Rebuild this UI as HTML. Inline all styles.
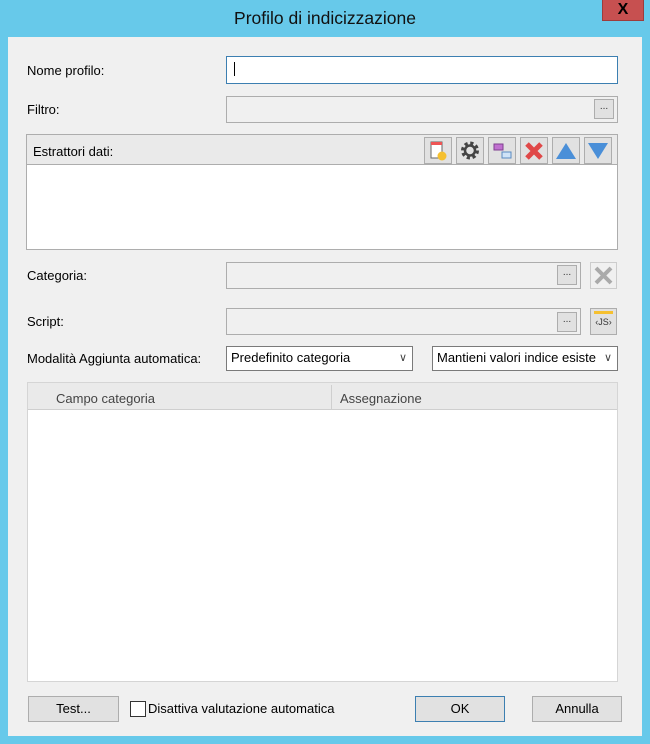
<!DOCTYPE html>
<html><head><meta charset="utf-8"><style>
*{box-sizing:border-box;margin:0;padding:0}
body{width:650px;height:744px;background:#67c9ea;position:relative;font-family:"Liberation Sans",sans-serif;font-size:13px;color:#000;overflow:hidden}
.a{position:absolute}
.title{left:0;width:650px;top:8px;text-align:center;font-size:17.5px;color:#111}
.close{left:602px;top:0;width:42px;height:21px;background:#c75050;border:1px solid #9d3c3c;border-top:none;color:#000;font-weight:bold;text-align:center;font-size:16px;line-height:20px}
.client{left:8px;top:37px;width:634px;height:699px;background:#f0f0f0}
.box{border:1px solid #adadad;background:#f0f0f0}
.white{background:#fff}
.dots{width:20px;height:20px;border:1px solid #adadad;background:#e1e1e1;text-align:center;font-size:10px;line-height:14px;color:#333}
.btn{border:1px solid #adadad;background:#e1e1e1;text-align:center;line-height:24px}
.tb{width:28px;height:27px;border:1px solid #adadad;background:#e1e1e1;top:137px}
.combo{border:1px solid #7a7a7a;background:#fff;line-height:22px;padding-left:4px;overflow:hidden;white-space:nowrap}
.chev{position:absolute;right:5px;top:0;font-size:11px;color:#444}
</style></head><body>
<div class="a title">Profilo di indicizzazione</div>
<div class="a close">X</div>
<div class="a client"></div>

<div class="a" style="left:27px;top:63px">Nome profilo:</div>
<div class="a white" style="left:226px;top:56px;width:392px;height:28px;border:1px solid #3c7fb1"></div>
<div class="a" style="left:234px;top:62px;width:1px;height:14px;background:#000"></div>

<div class="a" style="left:27px;top:102px">Filtro:</div>
<div class="a box" style="left:226px;top:96px;width:392px;height:27px"></div>
<div class="a dots" style="left:594px;top:99px">...</div>

<div class="a" style="left:26px;top:134px;width:592px;height:116px;border:1px solid #adadad;background:#fff"></div>
<div class="a" style="left:27px;top:135px;width:590px;height:30px;background:#eaeaea;border-bottom:1px solid #adadad"></div>
<div class="a" style="left:33px;top:144px">Estrattori dati:</div>
<div class="a tb" style="left:424px"><svg width="26" height="25"><rect x="6" y="4" width="11" height="16" fill="#fff" stroke="#666"/><rect x="6" y="4" width="11" height="3" fill="#e55"/><circle cx="17" cy="18" r="4.5" fill="#f5c030"/></svg></div>
<div class="a tb" style="left:456px"><svg width="26" height="25"><circle cx="13" cy="12.5" r="7" fill="none" stroke="#444" stroke-width="4" stroke-dasharray="3 2.5"/><circle cx="13" cy="12.5" r="5" fill="none" stroke="#444" stroke-width="2.5"/></svg></div>
<div class="a tb" style="left:488px"><svg width="26" height="25"><rect x="5" y="6" width="9" height="6" fill="#c070d0" stroke="#804090"/><rect x="13" y="14" width="9" height="6" fill="#cfe3f7" stroke="#5a8ac0"/></svg></div>
<div class="a tb" style="left:520px"><svg width="26" height="25"><path d="M6 6L20 20M20 6L6 20" stroke="#e04848" stroke-width="5"/></svg></div>
<div class="a tb" style="left:552px"><svg width="26" height="25"><path d="M3 21L13 5L23 21Z" fill="#4a8fd8"/></svg></div>
<div class="a tb" style="left:584px"><svg width="26" height="25"><path d="M3 5L23 5L13 21Z" fill="#4a8fd8"/></svg></div>

<div class="a" style="left:27px;top:268px">Categoria:</div>
<div class="a box" style="left:226px;top:262px;width:355px;height:27px"></div>
<div class="a dots" style="left:557px;top:265px">...</div>
<div class="a" style="left:590px;top:262px;width:27px;height:27px;border:1px solid #ccc"><svg width="25" height="25"><path d="M5 5L20 20M20 5L5 20" stroke="#aaa" stroke-width="4"/></svg></div>

<div class="a" style="left:27px;top:314px">Script:</div>
<div class="a box" style="left:226px;top:308px;width:355px;height:27px"></div>
<div class="a dots" style="left:557px;top:312px">...</div>
<div class="a" style="left:590px;top:308px;width:27px;height:27px;border:1px solid #adadad;background:#e1e1e1"><div style="height:3px;background:#f5c030;margin:2px 3px 0"></div><div style="font-size:9px;text-align:center;color:#333;margin-top:3px">‹JS›</div></div>

<div class="a" style="left:27px;top:351px">Modalità Aggiunta automatica:</div>
<div class="a combo" style="left:226px;top:346px;width:187px;height:25px">Predefinito categoria<span class="chev">&#8744;</span></div>
<div class="a combo" style="left:432px;top:346px;width:186px;height:25px">Mantieni valori indice esiste<span class="chev" style="background:#fff;padding-left:4px">&#8744;</span></div>

<div class="a" style="left:27px;top:382px;width:591px;height:300px;border:1px solid #d5d5d5;background:#fff"></div>
<div class="a" style="left:28px;top:383px;width:589px;height:27px;background:#eaeaea;border-bottom:1px solid #cfcfcf"></div>
<div class="a" style="left:331px;top:385px;width:1px;height:24px;background:#cfcfcf"></div>
<div class="a" style="left:56px;top:391px;color:#444">Campo categoria</div>
<div class="a" style="left:340px;top:391px;color:#444">Assegnazione</div>

<div class="a btn" style="left:28px;top:696px;width:91px;height:26px">Test...</div>
<div class="a" style="left:130px;top:701px;width:16px;height:16px;border:1px solid #333;background:#fff"></div>
<div class="a" style="left:148px;top:701px">Disattiva valutazione automatica</div>
<div class="a btn" style="left:415px;top:696px;width:90px;height:26px;border-color:#3c7fb1">OK</div>
<div class="a btn" style="left:532px;top:696px;width:90px;height:26px">Annulla</div>
</body></html>
